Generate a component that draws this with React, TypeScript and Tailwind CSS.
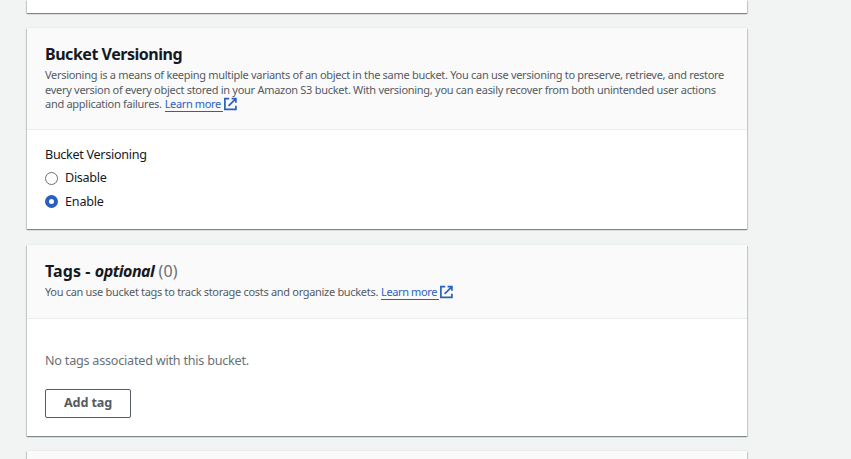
import type { ReactNode } from "react";

function ExternalIcon() {
  return (
    <svg className="inline-block h-[14px] w-[14px] shrink-0" viewBox="0 0 14 14" fill="none" stroke="#2a5fc1" strokeWidth="1.7">
      <path d="M5.2 1.7H0.9V12.3H11.9V8.8" />
      <path d="M7.6 1.7H11.9V5.8" />
      <path d="M11.7 1.9L4.6 8.8" />
    </svg>
  );
}

function LearnMore() {
  return (
    <a className="inline-flex h-[14px] items-center tracking-[-0.38px] text-[#2a5fc1]">
      <span className="mr-px h-[15px] w-[58px] border-b border-[#2a5fc1] leading-[13px]">Learn more</span>
      <ExternalIcon />
    </a>
  );
}

function Card({ className, header, children }: { className: string; header: ReactNode; children?: ReactNode }) {
  return (
    <section className={`w-[720px] shrink-0 bg-white shadow-[0_1px_1px_0_rgba(0,28,36,0.3),1px_1px_1px_0_rgba(0,28,36,0.15),-1px_1px_1px_0_rgba(0,28,36,0.15),0_-1px_0_0_#eaeded] ${className}`}>
      <header className="border-b border-[#eaeded] bg-[#fafafa] px-[18px] pt-4">{header}</header>
      {children}
    </section>
  );
}

export default function App() {
  return (
    <main className="flex h-[459px] w-[851px] flex-col gap-4 overflow-hidden bg-[#f2f3f3] pl-[27px] font-['Noto_Sans','Open_Sans',sans-serif] text-[#16191f]">
      <div className="-mb-px h-[13px] w-[720px] shrink-0 bg-white shadow-[0_1px_1px_0_rgba(0,28,36,0.3),1px_1px_1px_0_rgba(0,28,36,0.15),-1px_1px_1px_0_rgba(0,28,36,0.15)]" />
      <Card
        className="h-[201px] [&>header]:h-[102px]"
        header={
          <>
            <h2 className="text-[16px] leading-5 font-bold tracking-[-0.47px]">Bucket Versioning</h2>
            <div className="mt-1 flex flex-col text-[11px] leading-[14.5px] whitespace-nowrap text-[#545b64]">
              <span className="tracking-[-0.298px]">Versioning is a means of keeping multiple variants of an object in the same bucket. You can use versioning to preserve, retrieve, and restore</span>
              <span className="tracking-[-0.285px]">every version of every object stored in your Amazon S3 bucket. With versioning, you can easily recover from both unintended user actions</span>
              <span className="flex gap-[3px] tracking-[-0.28px]">and application failures.<LearnMore /></span>
            </div>
          </>
        }
      >
        <div className="flex flex-col px-[18px] pt-4 text-[12.6px] leading-[18px] tracking-[-0.3px]">
          <span>Bucket Versioning</span>
          <label className="mt-[5px] flex items-center gap-[7px]">
            <span className="h-[13px] w-[13px] rounded-full border border-[#687078] bg-white" />
            Disable
          </label>
          <label className="mt-[6px] flex items-center gap-[7px] tracking-[-0.2px]">
            <span className="mb-px h-[13px] w-[13px] rounded-full border-4 border-[#2a5fc1] bg-white" />
            Enable
          </label>
        </div>
      </Card>
      <Card
        className="h-[191px] [&>header]:h-[74px]"
        header={
          <>
            <h2 className="text-[16px] leading-5 font-bold tracking-[0.1px]">
              Tags - <em className="tracking-[-0.5px]">optional</em> <span className="font-normal text-[#687078]">(0)</span>
            </h2>
            <div className="mt-1 flex gap-[3px] text-[11px] leading-[14.5px] tracking-[-0.31px] whitespace-nowrap text-[#545b64]">
              You can use bucket tags to track storage costs and organize buckets.<LearnMore />
            </div>
          </>
        }
      >
        <div className="px-[18px] pt-[33px] text-[12.6px] tracking-[-0.22px]">
          <p className="leading-[18px] text-[#687078]">No tags associated with this bucket.</p>
          <button className="mt-[19px] h-[29px] w-[86px] rounded-[2px] border border-[#545b64] bg-white pb-0.5 leading-[18px] font-bold tracking-[-0.1px] text-[#545b64]">Add tag</button>
        </div>
      </Card>
      <Card className="-mt-px h-[60px]" header={<div className="h-10" />} />
    </main>
  );
}
